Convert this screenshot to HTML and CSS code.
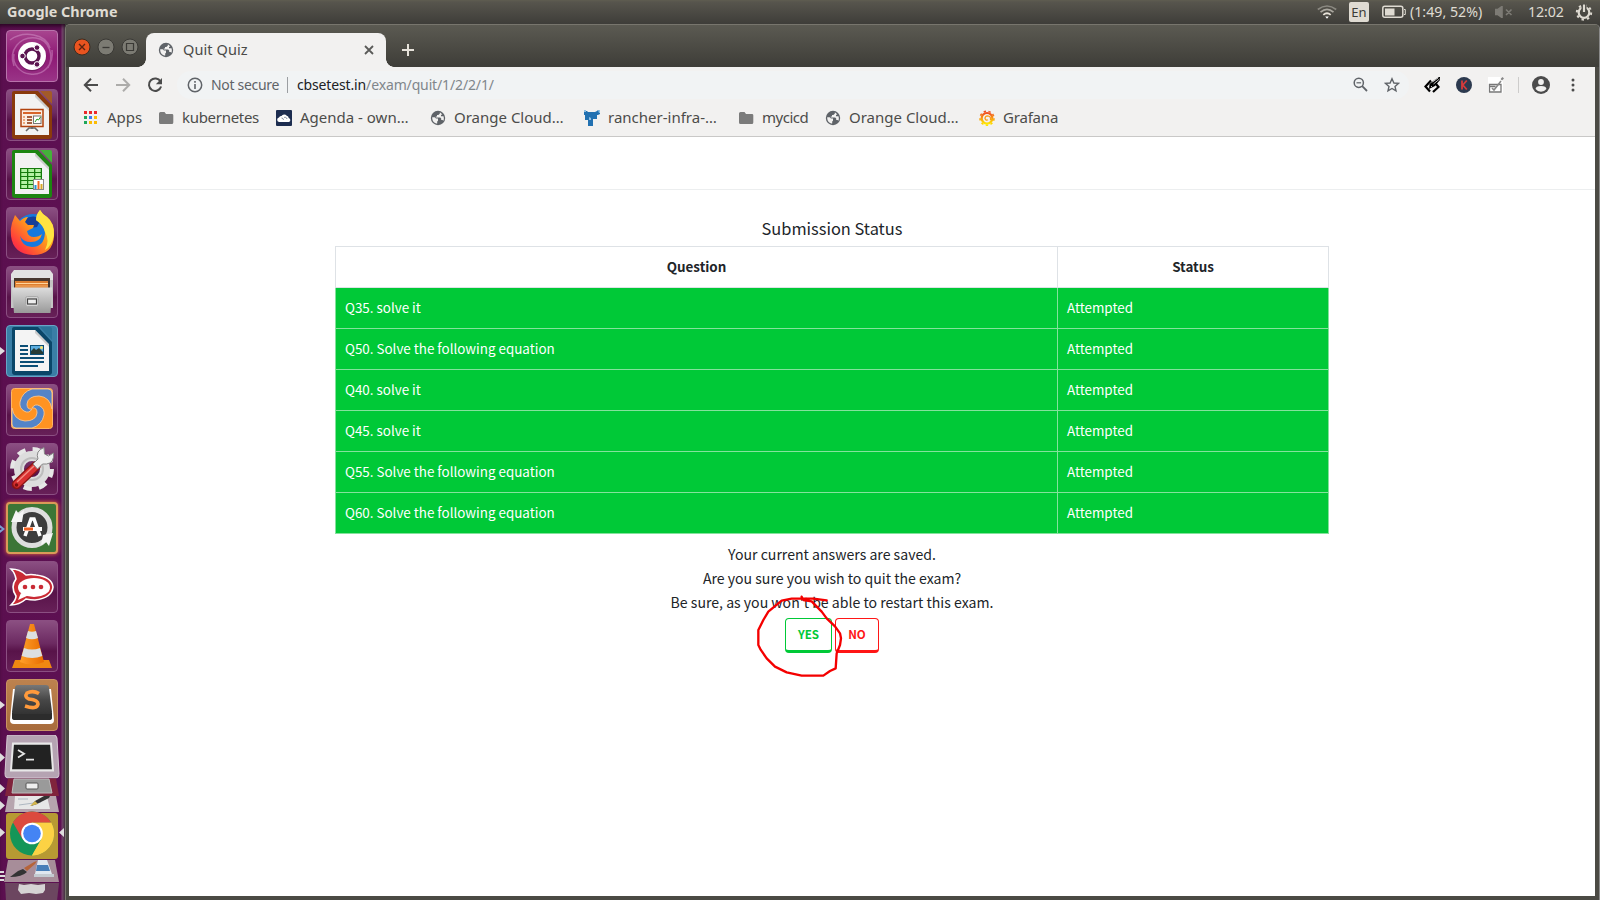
FILE: index.html
```html
<!DOCTYPE html>
<html lang="en">
<head>
<meta charset="utf-8">
<title>Quit Quiz</title>
<link rel="stylesheet" href="styles.css">
</head>
<body>
<svg class="defs" width="0" height="0">
  <defs>
    <symbol id="globe" viewBox="0 0 16 16"><circle cx="8" cy="8" r="7.2" fill="#5f6368"/><path d="M2.200 7.200h2.500l1.300 1.300h2v2.300l-.8.800v1.900C4.300 13.500 2 11 2.200 7.200zM9.800 2.400v1.400L8.300 5H7v1.500H5.800v1h4.400l1 1v1.400h1.300l.9.900c.6-1.500.6-3 .1-4.500H11V4.800h1.300C11.600 3.500 10.800 2.800 9.800 2.400z" fill="#f2f1f0"/></symbol>
    <symbol id="folder" viewBox="0 0 16 16"><path d="M1 3.500Q1 2 2.500 2h4L8 4h6q1.300 0 1.300 1.300v7.200q0 1.500-1.500 1.500H2.500Q1 14 1 12.500z" fill="#7b7b7b"/></symbol>
    <linearGradient id="gSteel" x2="0" y2="1"><stop offset="0" stop-color="#ddd"/><stop offset="1" stop-color="#999"/></linearGradient>
    <linearGradient id="gDark" x2="0" y2="1"><stop offset="0" stop-color="#777"/><stop offset=".5" stop-color="#484848"/><stop offset="1" stop-color="#333"/></linearGradient>
    <linearGradient id="gFox" x1="1" x2="0" y2="1"><stop offset="0" stop-color="#fff04a"/><stop offset=".45" stop-color="#ff9a1c"/><stop offset=".8" stop-color="#ff3a3c"/><stop offset="1" stop-color="#e3176b"/></linearGradient>
    <linearGradient id="gCone" x2="1"><stop offset="0" stop-color="#ffa02a"/><stop offset="1" stop-color="#e86c00"/></linearGradient>
    <linearGradient id="gGraf" x2="0" y2="1"><stop offset="0" stop-color="#f04e23"/><stop offset="1" stop-color="#ffe800"/></linearGradient>
  </defs>
</svg>

<header class="panel">
  <span class="panel-title">Google Chrome</span>
  <svg class="wifi" width="20" height="16" viewBox="0 0 20 16"><g fill="none" stroke-width="1.700"><path d="M.8 5.500Q10-1.500 19.200 5.500" stroke="#8b8981"/><path d="M3.500 8.200Q10 2.600 16.500 8.200" stroke="#aaa79f"/><path d="M6.300 10.900Q10 7.600 13.700 10.900" stroke="#e8e3d9"/></g><path d="M8.200 12.600h3.600L10 14.800z" fill="#fff"/></svg>
  <span class="lang">En</span>
  <svg class="battery" width="24" height="14" viewBox="0 0 24 14"><rect x=".8" y="1.300" width="20" height="11" rx="2" fill="none" stroke="#dfdbd2" stroke-width="1.500"/><rect x="3" y="3.500" width="9.500" height="7" fill="#dfdbd2"/><path d="M22 4.500h1.300v5H22" fill="none" stroke="#dfdbd2"/></svg>
  <span class="charge">(1:49, 52%)</span>
  <svg class="mute" width="18" height="12" viewBox="0 0 18 12"><path d="M0 3.500h3L7 .5v11L3 8.500H0zM11 3.500l5.500 5.500m0-5.500L11 9" fill="#7d7b75" stroke="#7d7b75" stroke-width="1.600"/></svg>
  <span class="clock">12:02</span>
  <svg class="gear" width="18" height="18" viewBox="0 0 18 18"><circle cx="9" cy="9.500" r="5.300" fill="none" stroke="#dfdbd2" stroke-width="2.200"/><circle cx="9" cy="9.500" r="7.200" fill="none" stroke="#dfdbd2" stroke-width="2" stroke-dasharray="2.400 3.255"/><path d="M6.500 1h5v7h-5z" fill="#4a4944"/><path d="M9 1.500v7.500" stroke="#dfdbd2" stroke-width="2.200"/></svg>
</header>

<div class="workspace">
<nav class="launcher">
  <div class="tile tile-dash"><svg viewBox="0 0 52 52"><g fill="none" stroke="#d9a0d0" stroke-opacity=".45" stroke-width="1.500"><path d="M8 36C2 20 14 6 30 8c14 2 18 18 12 30M46 20c2 14-8 26-22 24C14 43 6 34 8 24M4 10C18 0 40 4 44 18"/></g><circle cx="26" cy="27" r="14.300" fill="#4a0b40" opacity=".4"/><circle cx="26" cy="26" r="14" fill="#fff"/><circle cx="26" cy="26" r="7" fill="none" stroke="#5b1450" stroke-width="3.400"/><g fill="#5b1450" stroke="#fff"><circle cx="16.500" cy="26" r="2.800"/><circle cx="31" cy="17.600" r="2.800"/><circle cx="31" cy="34.400" r="2.800"/></g></svg></div>
  <div class="tile"><svg viewBox="0 0 52 52"><path d="M8 2h24l14 15v30q0 3-3 3H9q-3 0-3-3V4q0-2 2-2z" fill="#8a3a0c"/><path d="M34 2h10q2 0 2 2v11z" fill="#a35a28"/><path d="M9 5h20l14 15v26H9z" fill="#f2f2f2"/><path d="M29 5v3l14 14v-3z" fill="#ccc"/><rect x="15" y="20.500" width="22" height="17" fill="#fbeee2" stroke="#b1420e" stroke-width="1.500"/><path d="M17 24h18" stroke="#d8662a" stroke-width="2"/><path d="M17 28h2m-2 3h2m-2 3h2" stroke="#e89058" stroke-width="1.500"/><path d="M21 28h5m-5 3h5m-5 3h5" stroke="#8a3008" stroke-width="1.700"/><rect x="27.500" y="27" width="7.500" height="7.500" fill="#fff" stroke="#777"/><path d="M29 33l2-3 1.500 1 2-3" fill="none" stroke="#24a024"/><path d="M26 38v2m-6 2 3-3h6l3 3" fill="none" stroke="#666" stroke-width="1.600"/></svg></div>
  <div class="tile"><svg viewBox="0 0 52 52"><path d="M8 2h24l14 15v30q0 3-3 3H9q-3 0-3-3V4q0-2 2-2z" fill="#1c8511"/><path d="M34 2h10q2 0 2 2v11z" fill="#44b13a"/><path d="M9 5h20l14 15v26H9z" fill="#f2f2f2"/><path d="M29 5v3l14 14v-3z" fill="#ccc"/><rect x="14" y="20" width="22" height="21" fill="#157b0c"/><path d="M15.300 22.500h5.700m1.300 0h5.700m1.300 0h5.400M15.300 26.500h5.700m1.300 0h5.700m1.300 0h5.400M15.300 30.500h5.700m1.300 0h5.700m1.300 0h5.400M15.300 34.500h5.700m1.300 0h5.700M15.300 38.500h5.700m1.300 0h5.700" stroke="#b4f2a4" stroke-width="2.800"/><rect x="27.500" y="31.500" width="10" height="10" fill="#fff" stroke="#888"/><path d="M29.500 41v-4" stroke="#2595d3" stroke-width="2"/><path d="M32.500 41v-8" stroke="#f26b21" stroke-width="2"/><path d="M35.500 41v-5" stroke="#d9a928" stroke-width="2"/></svg></div>
  <div class="tile"><svg viewBox="0 0 52 52"><circle cx="27" cy="26" r="19" fill="#1779dd"/><path d="M18 12q10-5 17 0l-4 8-13 2z" fill="#173f98"/><path d="M6 16 9 8l5 6q4-4 8-4l-3 5 3 3h6l-1 3-6 3q1 6 7 6 5 0 8-3-2 8-11 8-8 0-11-6 2 11 12 11 12 0 13-14Q39 18 30 13q1-6 4-10 2 4 7 7 8 6 7 19-1 19-21 19Q7 47 5 29 4 22 6 16z" fill="url(#gFox)"/><path d="M30 13q0-6 4-10 2 4 7 7 7 6 7 18-2 11-9 15 5-10 0-18-2-7-9-12z" fill="#ffe341"/></svg></div>
  <div class="tile"><svg viewBox="0 0 52 52"><path d="M8 4h36l3 4v6H5V8z" fill="#e2e2e2"/><path d="M5 14h42v28H5z" fill="#c4c4c4"/><path d="M8 12h36v12H8z" fill="#46372f"/><path d="M9 15h33v8H9z" fill="#dd7e30"/><path d="M10 17.500h32" stroke="#ffd49c"/><path d="M10 20h32" stroke="#f4ad68"/><path d="M6 21.500h40l-1.500 25.500H8z" fill="url(#gSteel)"/><rect x="19.500" y="30.500" width="13" height="10" rx="2" fill="#d4d4d4" stroke="#aaa"/><rect x="21.500" y="33" width="9" height="5" fill="#eee" stroke="#444" stroke-width="1.200"/></svg></div>
  <div class="tile tile-writer"><i class="run"></i><svg viewBox="0 0 52 52"><path d="M8 2h24l14 15v30q0 3-3 3H9q-3 0-3-3V4q0-2 2-2z" fill="#0a4668"/><path d="M34 2h10q2 0 2 2v11z" fill="#2c7399"/><path d="M9 5h20l14 15v26H9z" fill="#f4f4f4"/><path d="M29 5v3l14 14v-3z" fill="#ccc"/><path d="M14 21h8m-8 4h8m-8 4h8m-8 4h24m-24 4h24m-24 4h18" stroke="#0c4f76" stroke-width="2"/><rect x="24.500" y="20.500" width="13" height="9" fill="#5caee0" stroke="#0c4f76"/><path d="M25 29v-3l3-3 2 2 3-2 4 4v2z" fill="#263b35"/><circle cx="35.500" cy="22.500" r="1.500" fill="#ffe26b"/></svg></div>
  <div class="tile"><svg viewBox="0 0 52 52"><rect x="5.500" y="4.500" width="41" height="40" rx="3" fill="#ff9322" stroke="#ffb565"/><g fill="#5484c8" stroke="#fbc58c" stroke-width=".9"><path id="arm" d="M26 5h16q4 0 4 4v16Q44 13 33 12 22 12 21 20q0 6 5 5-3 5-8 2-5-3-4-9Q16 8 26 5z"/><use href="#arm" transform="rotate(180 26 24.500)"/></g></svg></div>
  <div class="tile"><svg viewBox="0 0 52 52"><circle cx="26" cy="26" r="18.500" fill="none" stroke="#e6e6e6" stroke-width="7" stroke-dasharray="7.800 6.730"/><circle cx="26" cy="26" r="13" fill="none" stroke="#ddd" stroke-width="10"/><circle cx="26" cy="26" r="11" fill="none" stroke="#bdbdbd" stroke-width="2"/><path d="M10.500 41.500 30 23" stroke="#8b1414" stroke-width="9.500" stroke-linecap="round"/><path d="M11 41 29 24" stroke="#d93131" stroke-width="7" stroke-linecap="round"/><path d="m11 39 17-16" stroke="#f38a80" stroke-width="1.500"/><path d="m27 21 5-5q-3-8 6-11.500l.5 6.500 4 2 5-3q1 10-7 11l-4 0-5 5z" fill="#eee" stroke="#888"/><circle cx="10.500" cy="42" r="1.800" fill="#7a1010"/></svg></div>
  <div class="tile tile-updater"><i class="run run-hollow"></i><svg viewBox="0 0 52 52"><circle cx="26" cy="25.500" r="18" fill="#3d3d3d" stroke="#dedede" stroke-width="5"/><path d="m5 20 5-12 3 4 5-4-2 12z" fill="#f5f5f5"/><path d="m47 31-4 13-3-4-5 3 2-10z" fill="#f5f5f5"/><path d="M19 34l6-17h3l6 17" fill="none" stroke="#fff" stroke-width="3.500"/><path d="M17 27h19" stroke="#fff" stroke-width="4"/><path d="M18 27h9" stroke="#f26022" stroke-width="3"/></svg></div>
  <div class="tile"><svg viewBox="0 0 52 52"><path d="M5 8q9 0 15 6 5-1 10 0 16 2 17 12-1 11-18 13-5 0-9-1-7 6-15 6 5-5 5-9-6-9 0-17Q9 12 5 8z" fill="#c92b35" stroke="#fff" stroke-width="1.600"/><ellipse cx="28" cy="26.500" rx="16" ry="9.500" fill="#fff"/><path d="m15 32-3 7 11-5z" fill="#fff"/><g fill="#c92b35"><circle cx="19" cy="26" r="2.300"/><circle cx="27" cy="26" r="2.300"/><circle cx="35" cy="26" r="2.300"/></g></svg></div>
  <div class="tile"><svg viewBox="0 0 52 52"><path d="M9 40h34l3 8H6z" fill="#f08812"/><path d="M24 4h4l10 38q-12 5-24 0z" fill="url(#gCone)"/><path d="M22 11q4 1.500 8 0l2 7q-6 2.500-12 0zM18 28q8 3 16 0l2.300 8q-10 4-20.600 0z" fill="#dcdfe0"/></svg></div>
  <div class="tile tile-sublime"><i class="run"></i><svg viewBox="0 0 52 52"><path d="M7 10 4 41q0 4 4 4h36q4 0 4-4l-3-31z" fill="#fff"/><path d="M6 34v5q0 2 3 2h34q3 0 3-2v-5z" fill="#2c2c2c"/><path d="M12 6h28q3 0 3 3l3 24q0 2-3 2H9q-3 0-3-2L9 9q0-3 3-3z" fill="url(#gDark)"/><path d="M33 14.500q-6-3.500-12-.5-3 4 2 6 9 1 9 5-1 6-13 2" fill="none" stroke="#ff9a3c" stroke-width="3.600"/></svg></div>
  <svg class="stack" viewBox="0 0 64 166" width="64" height="166">
    <g transform="scale(1 1.070)"><path d="M8 0h46q2 0 3 3l2 33q0 4-3 4H8q-3 0-3-4L7 3q0-3 1-3z" fill="#b5a3b2" stroke="#d4c6d1"/><path d="M13 8h38l2 25H11z" fill="#222" stroke="#e8e8e8" stroke-width="2"/><path d="m18 14 6 3.500-6 3.500M26 23h8" fill="none" stroke="#e4e4e4" stroke-width="1.800"/></g>
    <path d="M8 43.500 5 61h54l-3-17.500z" fill="#80243c"/><path d="m14 44-2 14h40l-3-14z" fill="#9a9a9a" stroke="#bbb"/><rect x="26" y="48" width="12" height="6" rx="1" fill="#eee" stroke="#555"/>
    <path d="M8 61 5 77h54l-3-16z" fill="#b7a5ae"/><path d="m15 61-1 13h36l-3-13z" fill="#e7e7e7"/><path d="m18 64 10 0m-9 6 22-3" stroke="#aeb7c1"/><path d="m31 71 4-5 9-5h6l-1 2-12 6z" fill="#333"/><path d="m30 71 5-5 3 3z" fill="#d4b64c"/>
    <rect x="6" y="78" width="52" height="46" rx="3" fill="#b79a33"/>
    <g transform="translate(0 .5)"><circle cx="32" cy="98" r="22" fill="#149658"/><path d="M32 98V87h19.050A22 22 0 0 1 32 120z" fill="#fcd244"/><path d="M32 98h11L32 120z" fill="#fcd244"/><path d="M32 120 41.500 103.500 32 98 24 106z" fill="#149658"/><path d="M41.500 103.500 32 120A22 22 0 0 0 51.050 87H32z" fill="#fcd244"/><path d="M22.500 103.500 12.950 87A22 22 0 0 1 51.050 87H32z" fill="#dc4a3e"/><circle cx="32" cy="98" r="10.800" fill="#fff"/><circle cx="32" cy="98" r="8.800" fill="#4484f4"/></g>
    <path d="M8 125 4 147h55l-4-22z" fill="#a78d99"/><path d="m5 148 1 18h51l2-18z" fill="#6c4660"/><path d="m10 142 8-6 5-2 4 3q-5 5-17 5z" fill="#333"/><path d="m24 133 10-6 3-1-2 3-8 7z" fill="#b5643a"/><path d="m38 125 9 0 5 14H35z" fill="#dfe7ef"/><path d="m37 130h11l2 6H36z" fill="#477eb8"/><path d="M34 139h20v3H34z" fill="#c4cbd1"/><path d="m19 149 5 1 7-1 7 1 7-1v6l-2 3-7 1-7-1-8 1-3-4z" fill="#d6d3d4"/>
    <g fill="#ddd"><path d="M0 18v9l5-4.500zM0 49v9l5-4.500zM0 66v9l5-4.500zM0 93v9l5-4.500zM64 93v9l-5-4.500z"/><path d="M0 136h4v2H0zM0 140h5v2H0zM0 144h4v2H0z"/></g>
  </svg>
</nav>

<section class="window">
  <div class="titlebar">
    <div class="controls">
      <svg viewBox="0 0 18 18"><circle cx="9" cy="9" r="8" fill="#e95420" stroke="#3b2c20"/><path d="m6 6 6 6m0-6-6 6" stroke="#5a2410" stroke-width="1.400"/></svg>
      <svg viewBox="0 0 18 18"><circle cx="9" cy="9" r="8" fill="#7c7b73" stroke="#3a3935"/><path d="M5.500 9.500h7" stroke="#3a3935" stroke-width="1.300"/></svg>
      <svg viewBox="0 0 18 18"><circle cx="9" cy="9" r="8" fill="#7c7b73" stroke="#3a3935"/><path d="M5.500 5.500h7v7h-7z" fill="none" stroke="#3a3935" stroke-width="1.200"/></svg>
    </div>
    <div class="tab">
      <svg width="16" height="16"><use href="#globe"/></svg>
      <span class="tab-title">Quit Quiz</span>
      <svg class="tab-close" width="10" height="10" viewBox="0 0 10 10"><path d="m1 1 8 8m0-8L1 9" stroke="#5a5a58" stroke-width="1.800"/></svg>
    </div>
    <svg class="newtab" width="12" height="12" viewBox="0 0 12 12"><path d="M6 0v12M0 6h12" stroke="#e6e2da" stroke-width="2"/></svg>
  </div>

  <div class="toolbar">
    <svg class="nav-icon" viewBox="0 0 16 16"><path d="M15 8H2.500M8 1.800 1.800 8 8 14.200" fill="none" stroke="#4b4b4b" stroke-width="2"/></svg>
    <svg class="nav-icon" viewBox="0 0 16 16"><path d="M1 8h12.500M8 1.800 14.200 8 8 14.200" fill="none" stroke="#adacaa" stroke-width="2"/></svg>
    <svg class="nav-icon reload" viewBox="0 0 16 16"><path d="M13.500 4.500A6.200 6.200 0 1 0 14.100 9.500" fill="none" stroke="#4b4b4b" stroke-width="2"/><path d="M15 1v6.200H8.800z" fill="#4b4b4b"/></svg>
    <div class="omnibox">
      <svg width="16" height="16" viewBox="0 0 16 16"><circle cx="8" cy="8" r="6.700" fill="none" stroke="#5f6368" stroke-width="1.500"/><path d="M8 7v5M8 4v1.700" stroke="#5f6368" stroke-width="1.600"/></svg>
      <span class="secure">Not secure</span>
      <span class="url"><span class="host">cbsetest.in</span><span class="path">/exam/quit/1/2/2/1/</span></span>
      <svg class="mag" width="15" height="15" viewBox="0 0 15 15"><circle cx="5.800" cy="5.800" r="4.600" fill="none" stroke="#5f6368" stroke-width="1.500"/><path d="m9.200 9.200 4.800 4.800" stroke="#5f6368" stroke-width="1.800"/><path d="M3.500 5.800h4.600" stroke="#5f6368" stroke-width="1.200"/></svg>
      <svg width="16" height="16" viewBox="0 0 16 16"><path d="m8 1.800 1.900 4.200 4.500.4-3.400 3 1 4.500L8 11.500l-4 2.400 1-4.500-3.400-3 4.500-.4z" fill="none" stroke="#5f6368" stroke-width="1.400"/></svg>
    </div>
    <svg class="ext pen" viewBox="0 0 16 16"><path d="M7 3.500 1.500 9.500 6 14.500M9 15l5.500-5L12 7" fill="none" stroke="#000" stroke-width="2.200"/><path d="m5 12 .5-5 5-4L15 0h1l0 3-5 6z" fill="#000"/><path d="m8.500 5 5.500-4M9.500 7 15.500 2M7 9l1 1" stroke="#f2f1f0" stroke-width=".8"/></svg>
    <svg class="ext" viewBox="0 0 16 16"><circle cx="8" cy="8" r="8" fill="#2c3a4f"/><path d="M6 3.500v9M10.800 3.500 6.800 8l4 4.500" fill="none" stroke="#d63b3b" stroke-width="1.800"/></svg>
    <svg class="ext" viewBox="0 0 16 16"><path d="M0 0h12L15 4v12H0z" fill="#fff"/><path d="M1.500 7.500h11.500v7.500H1.500zM1.500 9.500h6" fill="none" stroke="#777" stroke-width="1.300"/><path d="m4 11 2 2 7-9" fill="none" stroke="#888" stroke-width="1.600"/><path d="m12.500 2 2-2 1.500 1.500-2 2z" fill="#888"/></svg>
    <span class="divider"></span>
    <svg class="account" viewBox="0 0 18 18"><circle cx="9" cy="9" r="9" fill="#4b4b4b"/><circle cx="9" cy="6" r="2.900" fill="#f2f1f0"/><path d="M3.600 13q0-3 5.400-3t5.400 3q-2 2.700-5.400 2.700T3.600 13z" fill="#f2f1f0"/></svg>
    <svg class="menu" viewBox="0 0 4 14"><g fill="#4b4b4b"><circle cx="2" cy="2" r="1.500"/><circle cx="2" cy="7" r="1.500"/><circle cx="2" cy="12" r="1.500"/></g></svg>
  </div>

  <div class="bookmarks">
    <div class="bm"><svg viewBox="0 0 16 16"><path d="M1 1h3v3H1zM6 1h3v3H6zM11 1h3v3h-3z" fill="#ea2a2a"/><path d="M1 6h3v3H1zM1 11h3v3H1z" fill="#1ea65a"/><path d="M6 6h3v3H6z" fill="#3d7bf0"/><path d="M11 6h3v3h-3zM6 11h3v3H6zM11 11h3v3h-3z" fill="#fbbc05"/></svg><span>Apps</span></div>
    <div class="bm tight"><svg><use href="#folder"/></svg><span>kubernetes</span></div>
    <div class="bm"><svg viewBox="0 0 16 16"><rect width="16" height="16" rx="1" fill="#1d2d50"/><path d="M3 12a2.300 2.300 0 0 1 0-4.500A2.300 2.300 0 0 1 5.500 6a3 3 0 0 1 5.200-.2 2.300 2.300 0 0 1 2 2.200 2.100 2.100 0 0 1 .3 4z" fill="#fff"/><path d="M5.500 8a2 2 0 0 1 2 2m.5-2.500a2 2 0 0 1 3 1.500" fill="none" stroke="#1d2d50" stroke-width=".5"/></svg><span>Agenda - own…</span></div>
    <div class="bm"><svg><use href="#globe"/></svg><span>Orange Cloud…</span></div>
    <div class="bm"><svg viewBox="0 0 16 16"><path d="M0 1h3l1 1h7l2-1 1-1h2v4l-2 1h-1v4H9v7H4V10H1V5H0z" fill="#2271b1"/><path d="M0 0h2v2H0zM14 0h2v3h-1zM5 7v3h2V8M9 5h2" fill="#8fc1e4"/></svg><span>rancher-infra-…</span></div>
    <div class="bm tighter"><svg><use href="#folder"/></svg><span>mycicd</span></div>
    <div class="bm"><svg><use href="#globe"/></svg><span>Orange Cloud…</span></div>
    <div class="bm"><svg viewBox="0 0 16 16"><circle cx="8" cy="8.300" r="5.300" fill="none" stroke="url(#gGraf)" stroke-width="2.200"/><circle cx="8" cy="8.300" r="7" fill="none" stroke="url(#gGraf)" stroke-width="1.600" stroke-dasharray="2.400 2.490"/><path d="M11.500 10Q12 6 8.600 5.800 6 6 6 8.500 7 11 9 9.800" fill="none" stroke="#f99c1c" stroke-width="1.300"/></svg><span class="grafana">Grafana</span></div>
  </div>

  <main class="page">
    <div class="page-nav"></div>
    <div class="content">
      <h1>Submission Status</h1>
      <table>
        <thead><tr><th class="q">Question</th><th>Status</th></tr></thead>
        <tbody>
          <tr><td>Q35. solve it</td><td>Attempted</td></tr>
          <tr><td>Q50. Solve the following equation</td><td>Attempted</td></tr>
          <tr><td>Q40. solve it</td><td>Attempted</td></tr>
          <tr><td>Q45. solve it</td><td>Attempted</td></tr>
          <tr><td>Q55. Solve the following equation</td><td>Attempted</td></tr>
          <tr><td>Q60. Solve the following equation</td><td>Attempted</td></tr>
        </tbody>
      </table>
      <p>Your current answers are saved.</p>
      <p>Are you sure you wish to quit the exam?</p>
      <p>Be sure, as you won't be able to restart this exam.</p>
      <div class="actions"><button class="yes">YES</button><button class="no">NO</button></div>
    </div>
  </main>
</section>
</div>
<svg class="scribble" width="90" height="84" viewBox="345 225 270 252"><path d="m485 230 5 10 25 4 30 31 15 20 25 24 15 21 3 15-3 20-10 25-3 45-17 8-20 14h-65l-45-10-35-17-25-25-18-26-7-14v-45l15-30 15-25 40-33 30-6h65l40 5" fill="none" stroke="#f40000" stroke-width="7" stroke-linejoin="round" stroke-linecap="round"/></svg>
</body>
</html>
```
FILE: styles.css
```css
* { box-sizing: border-box; }
body {
  margin: 0;
  width: 1600px;
  height: 900px;
  overflow: hidden;
  position: relative;
  font-family: "Noto Sans", "Open Sans", sans-serif;
  background: #3c3b37;
}
svg { display: block; flex: none; }
.defs { position: absolute; }

.panel {
  display: flex;
  align-items: center;
  height: 24px;
  padding: 0 8px 0 7px;
  color: #dfdbd2;
  font-size: 14.2px;
  white-space: nowrap;
  background: linear-gradient(#5f5d50 0, #57554d 2px, #3e3d39 100%);
}
.panel span { flex: none; }
.panel-title { width: 1310px; font-weight: bold; font-size: 14.4px; padding-bottom: 2px; }
.lang {
  width: 20px;
  height: 20px;
  margin-left: 12px;
  border-radius: 2px;
  background: #dfdbd2;
  color: #3c3b37;
  font-size: 13px;
  line-height: 20px;
  text-align: center;
}
.battery { margin-left: 13px; }
.charge { width: 81px; margin-left: 4px; padding-bottom: 2px; }
.mute { margin-left: 4px; }
.clock { width: 34px; margin-left: 15px; padding-bottom: 1px; letter-spacing: -.1px; }
.gear { margin-left: 13px; }

.workspace { display: flex; height: 876px; }
.launcher {
  flex: none;
  width: 65px;
  display: flex;
  flex-direction: column;
  gap: 7px;
  padding-top: 6px;
  background: linear-gradient(90deg, #5b0f4f 0, #5d1052 61px, #75426c 62px, #4b3c48 65px);
  box-shadow: inset 0 4px 4px -2px #26041f;
}
.tile {
  position: relative;
  flex: none;
  width: 52px;
  height: 52px;
  margin-left: 6px;
  border: 1px solid #8b4f82;
  border-radius: 4px;
  background: linear-gradient(#8b4f82 0, #6c2a61 45%, #581349 60%, #672058);
}
.tile > svg { width: 52px; height: 52px; margin: -1px; }
.tile-dash { background: linear-gradient(#a8458f, #8d1874 50%, #9a3487); border-color: #b873ab; }
.tile-writer { background: #3a7ea6; border-color: #68a5c6; }
.tile-updater { background: #3c7636; border: 2px solid #d99a58; box-shadow: 0 0 4px #f07040; }
.tile-updater > svg { margin: -2px; }
.tile-sublime { background: linear-gradient(#bd824e, #a86c3c); border-color: #c99363; }
.run {
  position: absolute;
  left: -7px;
  top: 21px;
  border-left: 5px solid #e0dde0;
  border-top: 4px solid transparent;
  border-bottom: 4px solid transparent;
}
.run-hollow { left: -8px; border-left-color: #7a9ed0; }
.run-hollow::after {
  content: "";
  position: absolute;
  left: -6px;
  top: -2px;
  border-left: 3px solid #5b0f4f;
  border-top: 2px solid transparent;
  border-bottom: 2px solid transparent;
}
.stack { margin-top: -3px; }

.window {
  flex: 1;
  min-width: 0;
  display: flex;
  flex-direction: column;
  padding: 0 4px 4px 3px;
  background: #4b4a44;
  border: 1px solid #77756d;
  border-right-color: #8a8a8a;
  border-bottom: 0;
  border-radius: 5px 5px 0 0;
}
.titlebar {
  display: flex;
  flex: none;
  height: 42px;
  margin: 0 -4px 0 -3px;
  padding-left: 7px;
  border-radius: 4px 4px 0 0;
  background: linear-gradient(#5b5a52, #3e3d38);
}
.controls { display: flex; gap: 6px; padding-top: 13px; width: 73px; }
.controls svg { width: 18px; height: 18px; }
.tab {
  display: flex;
  align-items: center;
  width: 240px;
  height: 34px;
  margin-top: 8px;
  padding: 0 12px;
  border-radius: 8px 8px 0 0;
  background: #f2f1f0;
  position: relative;
}
.tab::before, .tab::after {
  content: "";
  position: absolute;
  bottom: 0;
  width: 8px;
  height: 8px;
}
.tab::before { left: -8px; background: radial-gradient(circle at 0 0, transparent 7.5px, #f2f1f0 8px); }
.tab::after { right: -8px; background: radial-gradient(circle at 100% 0, transparent 7.5px, #f2f1f0 8px); }
.tab-title { margin-left: 9px; padding-bottom: 2px; font-size: 14.5px; letter-spacing: .1px; color: #4a4a48; }
.tab-close { margin-left: auto; }
.newtab { margin: 19px 0 0 16px; }

.toolbar {
  display: flex;
  flex: none;
  align-items: center;
  height: 35px;
  padding-left: 14px;
  background: #f2f1f0;
}
.nav-icon { width: 16px; height: 16px; margin-right: 16px; }
.reload { margin-right: 14px; }
.omnibox {
  flex: none;
  display: flex;
  align-items: center;
  width: 1232px;
  height: 28px;
  padding: 0 9px 0 10px;
  border-radius: 14px;
  background: #f1f3f4;
  font-size: 14px;
  white-space: nowrap;
}
.secure { margin-left: 8px; color: #5f6368; letter-spacing: -.32px; }
.url {
  margin-left: 8px;
  padding-left: 9px;
  border-left: 1px solid #9b9ea2;
  line-height: 16px;
  color: #202124;
  letter-spacing: -.14px;
}
.path { color: #80868b; }
.mag { margin-left: auto; margin-right: 16px; }
.ext { width: 16px; height: 16px; margin-left: 16px; }
.pen { margin-left: 15px; }
.divider { width: 1px; height: 16px; margin: 0 13px 0 14px; background: #cdcccb; }
.account { width: 18px; height: 18px; }
.menu { width: 4px; height: 14px; margin-left: 21px; }

.bookmarks {
  display: grid;
  flex: none;
  grid-template-columns: 75px 118px 154px 154px 154px 87px 154px 100px;
  align-items: center;
  height: 35px;
  padding: 0 0 2px 14px;
  border-bottom: 1px solid #c9c8c7;
  background: #f2f1f0;
  font-size: 15px;
  line-height: 20px;
  color: #4c4c4a;
  white-space: nowrap;
}
.bm { display: flex; align-items: center; gap: 8px; }
.bm span { margin-top: -2px; }
.bm svg { width: 16px; height: 16px; }
.tight { letter-spacing: -.3px; }
.tighter { letter-spacing: -.5px; }
.grafana { letter-spacing: -.2px; }

.page {
  flex: 1;
  background: #fff;
  color: #212529;
  font-family: "Noto Sans CJK JP", "Noto Sans", sans-serif;
  font-size: 14.1px;
}
.page-nav { height: 53px; border-bottom: 1px solid #eceeef; }
.content { width: 994px; margin: 0 auto; padding-top: 26px; text-align: center; }
h1 { margin: 0; height: 30px; line-height: 24px; font-size: 16.4px; font-weight: normal; }
table { width: 994px; border-collapse: collapse; table-layout: fixed; font-size: 13.4px; }
th, td {
  height: 41px;
  padding: 0 9px 2px;
  line-height: 20px;
  border: 1px solid #dee2e6;
}
th { font-weight: bold; }
.q { width: 722px; }
td { text-align: left; color: #fff; background: #00c937; border-color: #84e29c; }
p { margin: 0; line-height: 24px; }
.content table + p { margin-top: 8px; }
.actions { display: flex; justify-content: center; gap: 3px; margin-top: 4px; }
button {
  height: 35px;
  padding: 0 0 2px;
  border: 1px solid;
  border-bottom-width: 3px;
  border-radius: 4px;
  background: #fff;
  font: bold 11.6px "Noto Sans CJK JP", sans-serif;
}
.yes { width: 47px; color: #00c937; }
.no { width: 44px; color: #ff1616; }
.scribble { position: absolute; left: 755px; top: 595px; }
```
